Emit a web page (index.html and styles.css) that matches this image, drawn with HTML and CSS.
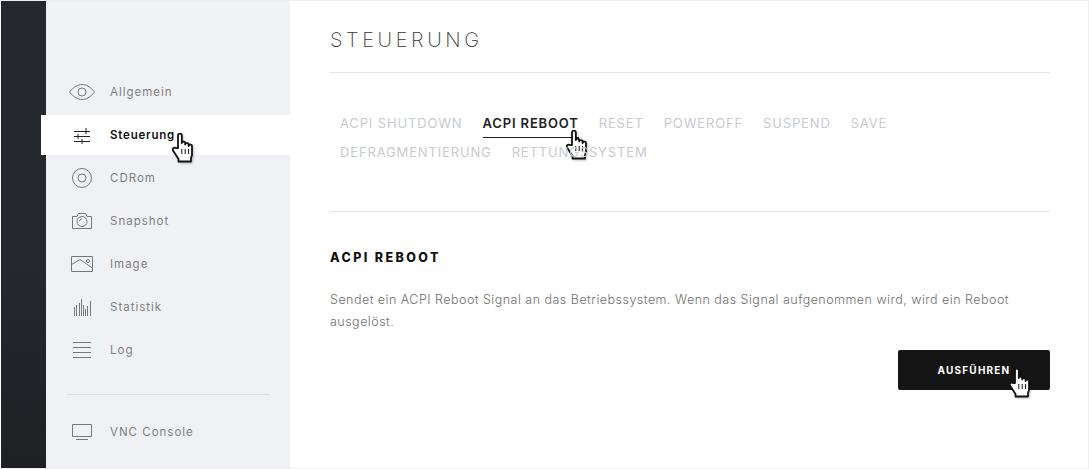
FILE: index.html
```html
<!DOCTYPE html>
<html lang="de">
<head>
    <meta charset="UTF-8">
    <meta name="viewport" content="width=device-width, initial-scale=1.0">
    <title>Steuerung</title>
    <link rel="stylesheet" href="styles.css">
</head>
<body>
    <svg class="defs" width="0" height="0">
        <symbol id="hand" viewBox="0 0 22 30">
            <path d="M6 15V2.500a1.900 1.900 0 0 1 3.800 0V10a1.700 1.700 0 0 1 3.400 .5v1a1.700 1.700 0 0 1 3.400 .5v1a1.700 1.700 0 0 1 3.400 .5V22l-1 3v3.500H6.500V26L1 17.500c-1-2 1.500-3.700 3-2.300z" fill="#fff" stroke="#111" stroke-width="1.800" stroke-linejoin="round"/>
            <path d="M9.800 16v5M13.200 16v5M16.600 16v5" stroke="#111" stroke-width="1"/>
        </symbol>
    </svg>

    <div class="app">
        <div class="rail"></div>

        <aside class="sidebar">
            <nav class="nav">
                <a class="nav-item">
                    <svg class="icon" viewBox="0 0 28 22"><path d="M1.500 11C6 5.500 10 3.500 14 3.500S22 5.500 26.500 11C22 16.500 18 18.500 14 18.500S6 16.500 1.500 11z"/><circle cx="14" cy="11" r="4"/></svg>
                    <span>Allgemein</span>
                </a>
                <a class="nav-item active">
                    <svg class="icon" viewBox="0 0 28 22"><path d="M6 7.500H22M6 12.500H22M6 17.500H22M18 4V10M10 10V15M14 15V20"/></svg>
                    <span>Steuerung</span>
                    <svg class="hand hand-nav"><use href="#hand"/></svg>
                </a>
                <a class="nav-item">
                    <svg class="icon" viewBox="0 0 28 22"><circle cx="14" cy="11" r="9.500"/><circle cx="14" cy="11" r="4"/></svg>
                    <span>CDRom</span>
                </a>
                <a class="nav-item">
                    <svg class="icon" viewBox="0 0 28 22"><path d="M4.500 6.500H9L10.500 3.500H17.500L19 6.500H23.500V18.500H4.500z"/><circle cx="14" cy="11.500" r="5"/><path d="M11.500 11.500A2.500 2.500 0 0 1 14 9"/></svg>
                    <span>Snapshot</span>
                </a>
                <a class="nav-item">
                    <svg class="icon" viewBox="0 0 28 22"><path d="M3.500 3.500H24.500V18.500H3.500zM3.500 11.500L12 6.500L24.500 15"/><circle cx="20" cy="8" r="1.500"/></svg>
                    <span>Image</span>
                </a>
                <a class="nav-item">
                    <svg class="icon" viewBox="0 0 28 22"><path d="M6.500 11V20M8.500 9V20M11.500 7V20M13.500 3V20M15.500 9V20M17.500 13V20M19.500 10V20M22.500 5V20"/></svg>
                    <span>Statistik</span>
                </a>
                <a class="nav-item">
                    <svg class="icon" viewBox="0 0 28 22"><path d="M5 3.500H23M5 8.500H23M5 13.500H23M5 18.500H23"/></svg>
                    <span>Log</span>
                </a>
            </nav>
            <div class="nav-divider"></div>
            <a class="nav-item">
                <svg class="icon" viewBox="0 0 28 22"><path d="M4.500 3.500H23.500V15.500H4.500zM8 18.500H20"/></svg>
                <span>VNC Console</span>
            </a>
        </aside>

        <main class="content">
            <h1>Steuerung</h1>

            <div class="tabs">
                <a class="tab">ACPI Shutdown</a>
                <a class="tab active">ACPI Reboot
                    <svg class="hand hand-tab"><use href="#hand"/></svg>
                </a>
                <a class="tab">Reset</a>
                <a class="tab">Poweroff</a>
                <a class="tab">Suspend</a>
                <a class="tab">Save</a>
                <a class="tab">Defragmentierung</a>
                <a class="tab">Rettungssystem</a>
            </div>

            <section class="panel">
                <h2>ACPI Reboot</h2>
                <p>Sendet ein ACPI Reboot Signal an das Betriebssystem. Wenn das Signal aufgenommen wird, wird ein Reboot ausgelöst.</p>
                <div class="actions">
                    <button type="button">Ausführen
                        <svg class="hand hand-btn"><use href="#hand"/></svg>
                    </button>
                </div>
            </section>
        </main>
    </div>
</body>
</html>
```

FILE: styles.css
```css
:root {
    --sidebar-bg: #f0f1f5;
    --line-color: #e4e5e9;
    --text-color: #7f8083;
    --tab-color: #c8cad2;
    --dark: #151515;
}

* {
    box-sizing: border-box;
    font-family: Inter, "Liberation Sans", sans-serif;
}

body {
    margin: 0;
    background-color: #fff;
}

.defs {
    display: block;
}

.app {
    display: flex;
    height: 469px;
    border: 1px solid #eeeef1;
    border-left-color: #fff;
    background-color: #fff;
}

.rail {
    width: 45px;
    background: linear-gradient(#25282d, #25282d 55%, #1e2024);
}

.sidebar {
    width: 244px;
    padding-top: 71px;
    background-color: var(--sidebar-bg);
}

.nav-item {
    position: relative;
    display: flex;
    align-items: center;
    gap: 14px;
    height: 40px;
    margin: 0 0 3px -5px;
    padding-left: 27px;
    font-size: 11.5px;
    letter-spacing: 1px;
    color: var(--text-color);
}

.nav-item.active {
    background-color: #fff;
    color: #111;
    font-weight: 600;
    letter-spacing: 0.8px;
}

.icon {
    width: 28px;
    height: 22px;
    fill: none;
    stroke: #77787c;
    stroke-width: 1;
}

.active .icon {
    stroke: #222;
}

.nav-divider {
    height: 1px;
    margin: 24px 20px 17px 21px;
    background-color: #dfe0e5;
}

.hand {
    position: absolute;
    width: 22px;
    height: 30px;
    filter: drop-shadow(1px 1px 1px rgba(0, 0, 0, 0.25));
}

.hand-nav {
    left: 131px;
    top: 18px;
}

.hand-tab {
    left: 83px;
    top: 21px;
}

.hand-btn {
    left: 111px;
    top: 18px;
}

.content {
    flex: 1;
    padding: 0 38px 0 40px;
}

h1 {
    margin: 0;
    padding: 28px 0 20px;
    border-bottom: 1px solid var(--line-color);
    font-size: 20px;
    line-height: 23px;
    font-weight: 200;
    letter-spacing: 3.600px;
    text-transform: uppercase;
    color: #333;
}

.tabs {
    display: flex;
    flex-wrap: wrap;
    align-content: flex-start;
    gap: 0 20px;
    height: 139px;
    padding: 36px 10px 0;
    border-bottom: 1px solid var(--line-color);
}

.tab {
    position: relative;
    height: 29px;
    padding-top: 7px;
    font-size: 13px;
    line-height: 15px;
    letter-spacing: 0.85px;
    text-transform: uppercase;
    color: var(--tab-color);
}

.tab.active {
    font-weight: 600;
    color: #222;
    border-bottom: 1px solid #222;
}

.panel {
    padding-top: 38px;
}

h2 {
    margin: 0;
    font-size: 12.500px;
    line-height: 15px;
    font-weight: 800;
    letter-spacing: 2.400px;
    text-transform: uppercase;
    color: #111;
}

p {
    margin: 24px 0 17px;
    font-size: 12.500px;
    line-height: 22px;
    font-weight: 300;
    letter-spacing: 0.48px;
    color: #707070;
}

.actions {
    display: flex;
    justify-content: flex-end;
}

button {
    position: relative;
    width: 152px;
    height: 40px;
    border: none;
    border-radius: 2px;
    background-color: var(--dark);
    color: #fff;
    font-size: 10px;
    font-weight: 700;
    letter-spacing: 1.200px;
    text-transform: uppercase;
}
```
